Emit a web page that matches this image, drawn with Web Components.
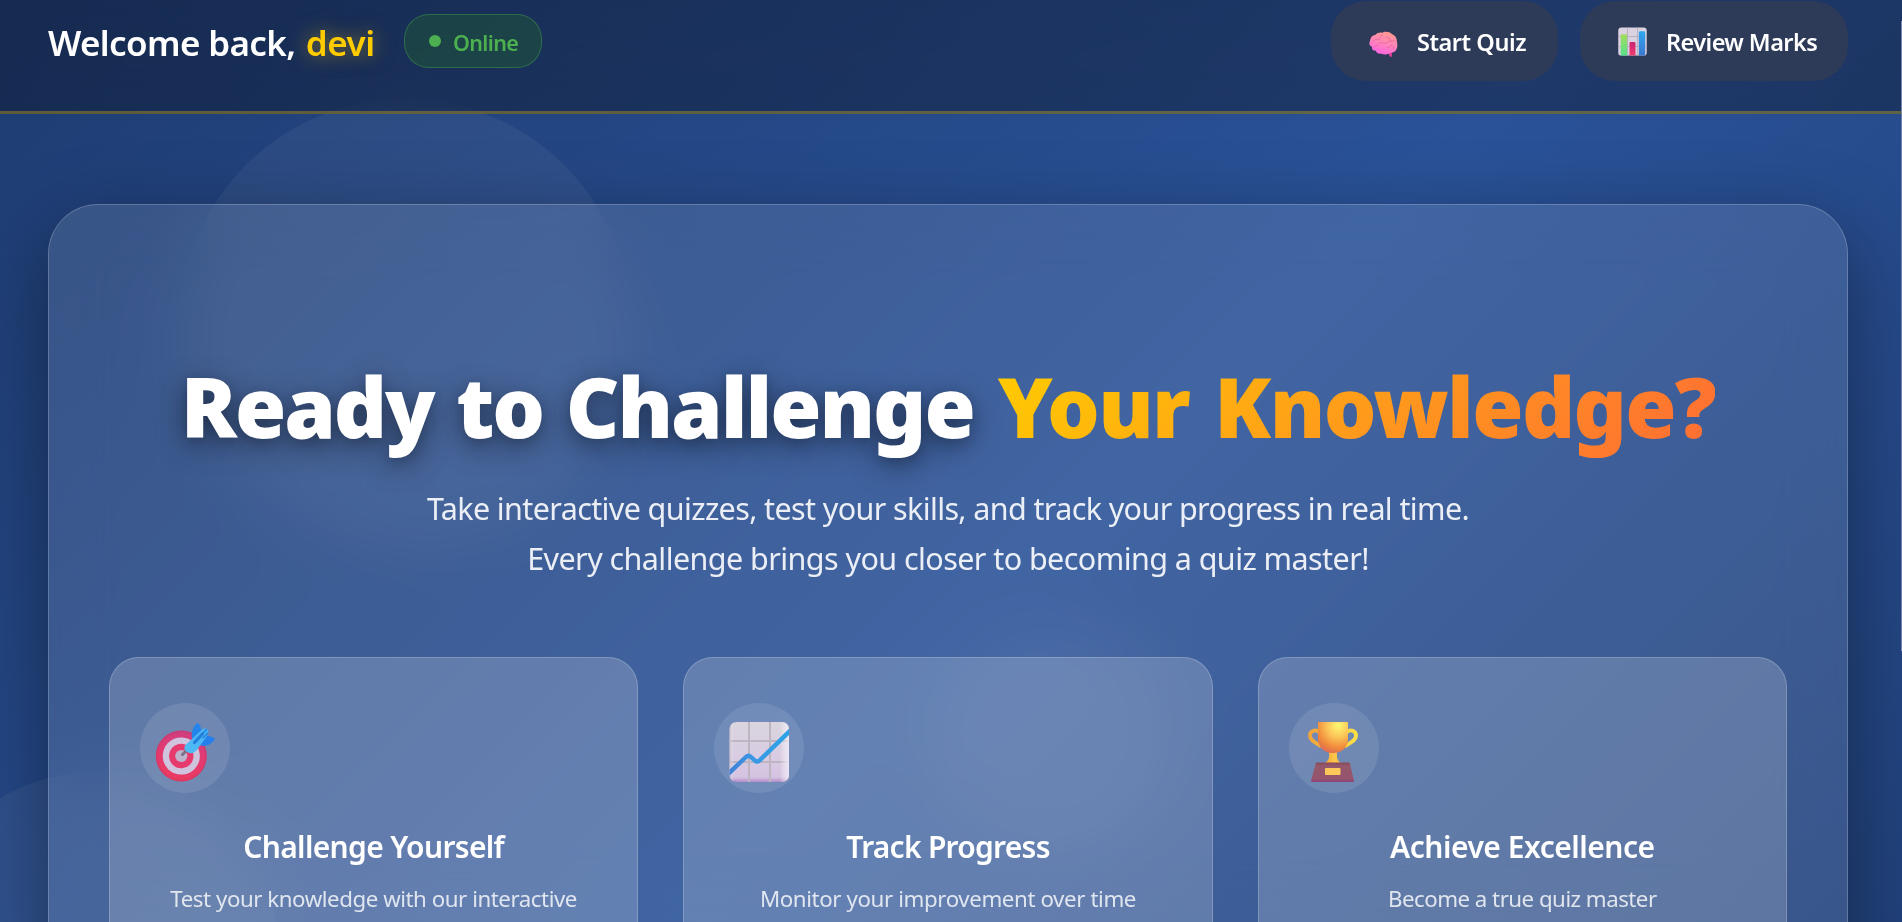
<!DOCTYPE html>
<html lang="en">
<head>
<meta charset="utf-8">
<title>Quiz Dashboard</title>
<style>
  html, body { margin: 0; height: 100%; overflow: hidden; }
  body { font-family: "Noto Sans", "Open Sans", sans-serif; color: #fff; }
</style>
</head>
<body>
<quiz-page>
  <quiz-header slot="header" name="devi">
    <nav-pill icon="brain" style="width:227px">Start Quiz</nav-pill>
    <nav-pill icon="bars" style="width:268px;letter-spacing:-.56px">Review Marks</nav-pill>
  </quiz-header>
  <hero-panel>
    <span slot="lead">Ready to Challenge</span>
    <span slot="accent">Your Knowledge?</span>
    <span slot="line1">Take interactive quizzes, test your skills, and track your progress in real time.</span>
    <span slot="line2">Every challenge brings you closer to becoming a quiz master!</span>
    <feature-card slot="cards" icon="target" style="--title-ls:-.67px;--desc-ls:-.46px">
      <span slot="title">Challenge Yourself</span>Test your knowledge with our interactive
    </feature-card>
    <feature-card slot="cards" icon="chart" style="--title-ls:-.74px;--desc-ls:-.4px">
      <span slot="title">Track Progress</span>Monitor your improvement over time
    </feature-card>
    <feature-card slot="cards" icon="trophy" style="--title-ls:-.49px;--desc-ls:-.52px">
      <span slot="title">Achieve Excellence</span>Become a true quiz master
    </feature-card>
  </hero-panel>
</quiz-page>

<script>
const ICONS = {
  brain: `<svg viewBox="0 0 32 32" preserveAspectRatio="none">
    <defs>
      <linearGradient id="bg" x1=".7" y1="0" x2=".35" y2="1"><stop offset="0" stop-color="#ff9a8f"/><stop offset=".5" stop-color="#ff86b8"/><stop offset="1" stop-color="#ff62e6"/></linearGradient>
    </defs>
    <path d="M20 25l3.200 6.300c.4.9 2.100.7 2.100-.5l-.3-6z" fill="#e0409c"/>
    <path d="M14.500 2.200C17-.2 23 .6 25.200 3.600c3.600 1.400 5.800 5.200 5.600 9.600.9 4.200.6 9-2 11.600-2.300 2.400-5.400 1.800-7.300 3.200-2.700 1.500-5.800.8-7.800-.1-3 .7-5.600-.9-6.100-3.600-3.200.1-4.800-2.300-4.200-4.900-2.900-1.100-3.900-4.600-2.200-7.200C1.400 8 3.800 4.900 7.300 4.500 9 2.400 12 1.400 14.500 2.200z" fill="url(#bg)"/>
    <g fill="none" stroke="#dc5596" stroke-width="1" stroke-linecap="round" opacity=".6">
      <path d="M4.500 13c1.500-3 4.500-3.500 6.500-2M11 11c2-3 1-5 4-6M9 18c1-3 4-4.500 7-3.500 3 .8 5 0 6-2M19 7.500c3 0 5 2 5 4.500M22 12.500c2 .5 4.500.2 6-1M20 20.500c2.500 0 4.500-1.500 5-3.500M8.500 18c-2 0-3 1-3.200 2.500M25 18c1.500.5 2.500 2 2.300 4"/>
    </g></svg>`,
  bars: `<svg viewBox="0 0 32 32">
    <defs>
      <linearGradient id="b1" x2="0" y2="1"><stop offset="0" stop-color="#a4dd5c"/><stop offset="1" stop-color="#55e08c"/></linearGradient>
      <linearGradient id="b2" x2="0" y2="1"><stop offset="0" stop-color="#c9256f"/><stop offset="1" stop-color="#f23c72"/></linearGradient>
      <linearGradient id="b3" x2="0" y2="1"><stop offset="0" stop-color="#2fa8f2"/><stop offset="1" stop-color="#3a77cf"/></linearGradient>
    </defs>
    <rect x=".3" y=".5" width="31.400" height="31" rx="3.500" fill="#dad2e0"/>
    <path d="M10.500.5v31M21.500.5v31M.3 10.500h31.400M.3 21.500h31.400" stroke="#b4aebb" stroke-width="1"/>
    <path d="M3 9.400q0-1.400 1.400-1.400h4.200q1.400 0 1.400 1.400v22.100H3.800q-.8 0-.8-.8z" fill="url(#b1)"/>
    <path d="M12.700 18q0-1.400 1.400-1.400h3.800q1.400 0 1.400 1.400v13.500h-6.600z" fill="url(#b2)"/>
    <path d="M23 6.200q0-1.400 1.400-1.400h4.200q1.400 0 1.400 1.400v24.500q0 .8-.8.8H23z" fill="url(#b3)"/></svg>`,
  target: `<svg viewBox="0 0 90 90">
    <defs>
      <linearGradient id="t1" x1=".6" y1="0" x2=".4" y2="1"><stop offset="0" stop-color="#cf3f80"/><stop offset=".45" stop-color="#e23a72"/><stop offset="1" stop-color="#ea3a60"/></linearGradient>
      <linearGradient id="t2" x1="0" y1="1" x2="1" y2="0"><stop offset="0" stop-color="#50bdf5"/><stop offset="1" stop-color="#46b2f5"/></linearGradient>
    </defs>
    <circle cx="41.300" cy="53" r="25.500" fill="url(#t1)"/>
    <circle cx="41.300" cy="53" r="24.700" fill="none" stroke="#b9355f" stroke-width="1.200" opacity=".35"/>
    <circle cx="41.300" cy="53" r="18.600" fill="#cfc3de"/>
    <circle cx="41.300" cy="53" r="12.200" fill="#e73b6d"/>
    <circle cx="41.300" cy="53" r="6.100" fill="#bdb3cc"/>
    <path d="M42.500 51.500l5-5" stroke="#7c7288" stroke-width="3" stroke-linecap="round"/>
    <path d="M52 36c-1.200-6 1-13 5.500-16.300 3 2.300 4 6.300 4 9.300z" fill="#2384ec"/>
    <path d="M59.500 42c5 2.500 11.500 0 15.500-6-2.500-3-7-3.500-10.500-3.300z" fill="#2680ec"/>
    <path d="M45 42.500L61.500 27q2.600-1.800 4.500-1.300 2.500.3 2.200 2.500 1.200 2-.7 4L56.500 47.500q-4.500 4.300-9 1.800-4.700-2.800-2.500-6.800z" fill="url(#t2)"/>
    <path d="M54.500 39.500l8-8.500" stroke="#237fdb" stroke-width="3.200" stroke-linecap="round"/>
    <path d="M61.500 31.500l5-5M63 35l5-5" stroke="#237fdb" stroke-width="1.300" stroke-linecap="round"/></svg>`,
  chart: `<svg viewBox="0 0 90 90">
    <defs>
      <linearGradient id="c1" x2="0" y2="1"><stop offset="0" stop-color="#dad5de"/><stop offset=".55" stop-color="#d8cce2"/><stop offset=".92" stop-color="#d5c3e2"/><stop offset="1" stop-color="#b28cc8"/></linearGradient>
      <linearGradient id="c2" x1="0" x2="1"><stop offset="0" stop-color="#b5a7b7" stop-opacity=".8"/><stop offset=".08" stop-color="#fff" stop-opacity="0"/><stop offset=".85" stop-color="#fff" stop-opacity="0"/><stop offset="1" stop-color="#efe8f4" stop-opacity=".9"/></linearGradient>
      <linearGradient id="c3" x1="0" x2="1"><stop offset="0" stop-color="#3f7fd6"/><stop offset=".4" stop-color="#3b98e4"/><stop offset="1" stop-color="#2ba4e6"/></linearGradient>
      <clipPath id="cc"><rect x="15.500" y="19" width="59.500" height="60" rx="7"/></clipPath>
    </defs>
    <g clip-path="url(#cc)">
      <rect x="15" y="19" width="60" height="60" fill="url(#c1)"/>
      <path d="M35 19v60M56 19v60M15 38h60M15 59h60" stroke="#bdb6c0" stroke-width="2"/>
      <rect x="15" y="19" width="60" height="60" fill="url(#c2)"/>
      <path d="M13 72L32 54q2.500-2.300 5 0l3.600 3.300q2.500 2.300 5 0L78 26" fill="none" stroke="url(#c3)" stroke-width="4.400"/>
    </g></svg>`,
  trophy: `<svg viewBox="0 0 90 90">
    <defs>
      <radialGradient id="p1" cx=".68" cy=".12" r=".95"><stop offset="0" stop-color="#fff872"/><stop offset=".4" stop-color="#fbc457"/><stop offset=".75" stop-color="#f08a3c"/><stop offset="1" stop-color="#dc6858"/></radialGradient>
      <linearGradient id="p2" x1="0" x2="1"><stop offset="0" stop-color="#f0a43c"/><stop offset="1" stop-color="#fce046"/></linearGradient>
      <linearGradient id="p3" x1="0" x2="1"><stop offset="0" stop-color="#f09c3c"/><stop offset=".6" stop-color="#fcc848"/><stop offset="1" stop-color="#eda83c"/></linearGradient>
      <linearGradient id="p4" x2="0" y2="1"><stop offset="0" stop-color="#874c58"/><stop offset=".2" stop-color="#95586c"/><stop offset=".85" stop-color="#95536c"/><stop offset="1" stop-color="#8c3f80"/></linearGradient>
    </defs>
    <path d="M30 29c-4-3.500-9.500-.7-9 4 .5 5 5.500 6.500 10.500 10M58 29c4-3.500 9.500-.7 9 4-.5 5-5.500 6.500-10.500 10" fill="none" stroke="url(#p2)" stroke-width="3.800" stroke-linecap="round"/>
    <path d="M40 49h8v5q.5 5 6.500 7.500H33.500q6-2.500 6.500-7.500z" fill="url(#p3)"/>
    <path d="M29 19.800q0-.8.800-.8h28.400q.8 0 .8.800V36c0 8-6 14-15 14s-15-6-15-14z" fill="url(#p1)"/>
    <path d="M26.800 60Q27.200 59.500 28 59.500h31.500q1 0 1.400.7L65 78q.1 1-1 1H23q-1.100 0-1-1z" fill="url(#p4)"/>
    <rect x="36" y="65" width="15.500" height="7" rx=".8" fill="#fdc75a"/></svg>`
};

class QuizPage extends HTMLElement {
  constructor() {
    super();
    this.attachShadow({ mode: 'open' }).innerHTML = `
      <style>
        :host { display: block; position: relative; height: 922px; overflow: hidden; isolation: isolate;
          background: linear-gradient(135deg, #1e3c72 0%, #2a5298 50%, #1e3c72 100%) 0 0 / 1902px 1300px no-repeat; }
        .orb { position: absolute; border-radius: 50%; background: rgba(255,255,255,.05); z-index: -1; }
        .a { left: 180px; top: 99px; width: 450px; height: 450px; }
        .b { left: -90px; top: 772px; width: 370px; height: 370px; }
        .c { left: 935px; top: 620px; width: 240px; height: 240px; background: rgba(255,255,255,.045); }
        main { padding: 90px 54px 0 48px; }
        .thumb { position: absolute; right: 0; top: 21px; width: 1px; height: 630px; background: #7783a8; }
      </style>
      <div class="orb a"></div><div class="orb b"></div><div class="orb c"></div>
      <slot name="header"></slot>
      <main><slot></slot></main>
      <div class="thumb"></div>`;
  }
}

class QuizHeader extends HTMLElement {
  constructor() { super(); this.attachShadow({ mode: 'open' }); }
  connectedCallback() {
    this.shadowRoot.innerHTML = `
      <style>
        :host { display: flex; justify-content: space-between; align-items: flex-start; box-sizing: border-box;
          height: 114px; padding: 1px 54px 0 48px; border-bottom: 3px solid rgba(255,204,0,.3);
          background: rgba(10,12,20,.35); backdrop-filter: blur(20px); }
        .left, nav { display: flex; align-items: center; height: 80px; }
        nav { gap: 22px; }
        h1 { margin: 3px 0 0; font-size: 35px; line-height: 50px; font-weight: 600; letter-spacing: -.64px; white-space: nowrap; width: 356px; }
        b { font-weight: 600; color: #fc0; text-shadow: 0 0 20px rgba(255,204,0,.5); margin-left: 2px; letter-spacing: -.5px; }
        .status { display: flex; align-items: center; gap: 12px; box-sizing: border-box; height: 54px; width: 138px; padding-left: 24px;
          border: 1px solid rgba(76,175,80,.4); border-radius: 25px; background: rgba(34,92,50,.45);
          color: #4caf50; font-size: 21.500px; font-weight: 600; letter-spacing: -.65px; }
        i { width: 12px; height: 12px; border-radius: 50%; background: #4caf50; }
        .status span { position: relative; top: 1px; }
      </style>
      <div class="left"><h1>Welcome back, <b>${this.getAttribute('name')}</b></h1>
        <div class="status"><i></i><span>Online</span></div></div>
      <nav><slot></slot></nav>`;
  }
}

class NavPill extends HTMLElement {
  constructor() { super(); this.attachShadow({ mode: 'open' }); }
  connectedCallback() {
    this.shadowRoot.innerHTML = `
      <style>
        :host { display: flex; align-items: center; box-sizing: border-box; height: 80px; padding-left: 38px;
          border-radius: 35px; background: #2d3b59; font-size: 23.500px; font-weight: 600; letter-spacing: -.45px; white-space: nowrap; }
        svg { display: block; width: 29px; height: 29px; margin-right: 19px; }
        .brain { width: 29px; height: 26px; margin-top: 6px; }
        span { position: relative; top: 1px; }
      </style>
      ${ICONS[this.getAttribute('icon')].replace('<svg', `<svg class="${this.getAttribute('icon')}"`)}<span><slot></slot></span>`;
  }
}

class HeroPanel extends HTMLElement {
  constructor() {
    super();
    this.attachShadow({ mode: 'open' }).innerHTML = `
      <style>
        :host { display: block; box-sizing: border-box; height: 1050px; padding: 151px 60px 0; text-align: center;
          border: 1px solid rgba(255,255,255,.2); border-radius: 50px;
          background: rgba(255,255,255,.11); backdrop-filter: blur(30px);
          box-shadow: 0 25px 80px rgba(0,0,0,.4); }
        h2 { margin: 0; height: 100px; font-size: 83px; line-height: 100px; font-weight: 900; white-space: nowrap; display: flex; align-items: flex-start; justify-content: center; gap: 24px; }
        .lead { letter-spacing: -2.050px; word-spacing: 3px; text-shadow: 0 8px 30px rgba(0,0,0,.45), 0 4px 12px rgba(0,0,0,.15); }
        .accent { letter-spacing: -1.650px; word-spacing: 5px; padding-bottom: 10px; color: transparent; background: linear-gradient(135deg, #fc0, #ff6b35); -webkit-background-clip: text; background-clip: text; }
        p { margin: 27px 0 74px; font-size: 30.500px; line-height: 50px; color: rgba(255,255,255,.9); }
        p div { letter-spacing: -.62px; }
        p div + div { letter-spacing: -.57px; }
        .cards { display: grid; grid-template-columns: repeat(3, 1fr); gap: 45px; }
      </style>
      <h2><span class="lead"><slot name="lead"></slot></span><span class="accent"><slot name="accent"></slot></span></h2>
      <p></p>
      <div class="cards"><slot name="cards"></slot></div>`;
    this.shadowRoot.querySelector('p').innerHTML = '<div><slot name="line1"></slot></div><div><slot name="line2"></slot></div>';
  }
}

class FeatureCard extends HTMLElement {
  constructor() { super(); this.attachShadow({ mode: 'open' }); }
  connectedCallback() {
    this.shadowRoot.innerHTML = `
      <style>
        :host { display: block; box-sizing: border-box; height: 380px; padding: 45px 30px; text-align: center;
          border: 1px solid rgba(255,255,255,.2); border-radius: 30px;
          background: rgba(255,255,255,.19); }
        .icon { width: 90px; height: 90px; border-radius: 50%; background: rgba(255,255,255,.1); margin-bottom: 33px; }
        svg { display: block; width: 90px; height: 90px; }
        h3 { margin: 0 0 13px; font-size: 30px; line-height: 42px; font-weight: 600; letter-spacing: var(--title-ls); }
        p { margin: 0; font-size: 22.300px; line-height: 36px; color: rgba(255,255,255,.8); letter-spacing: var(--desc-ls); }
      </style>
      <div class="icon">${ICONS[this.getAttribute('icon')]}</div>
      <h3><slot name="title"></slot></h3>
      <p><slot></slot></p>`;
  }
}

customElements.define('quiz-page', QuizPage);
customElements.define('quiz-header', QuizHeader);
customElements.define('nav-pill', NavPill);
customElements.define('hero-panel', HeroPanel);
customElements.define('feature-card', FeatureCard);
</script>
</body>
</html>
